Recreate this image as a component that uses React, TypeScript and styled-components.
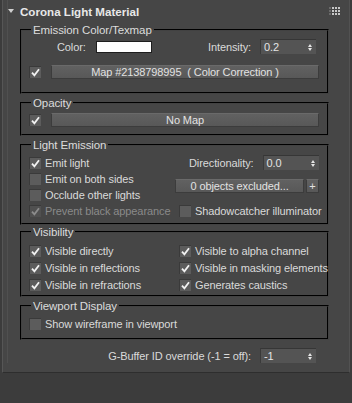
import React from "react";
import styled, { createGlobalStyle } from "styled-components";

const GlobalStyle = createGlobalStyle`
  html, body {
    margin: 0;
    padding: 0;
    background: #3c3c3c;
  }
  body {
    font-family: "Liberation Sans", Arial, sans-serif;
    font-size: 11px;
    letter-spacing: -0.1px;
    color: #dadada;
  }
`;

const Page = styled.div`
  width: 352px;
  height: 403px;
  padding-left: 2px;
  box-sizing: border-box;
`;

const Rollout = styled.div`
  width: 348px;
  height: 373px;
  box-sizing: border-box;
  background: #464646;
  border-left: 1px solid #565656;
  border-right: 1px solid #525252;
  border-bottom: 1px solid #2e2e2e;
`;

const Header = styled.div`
  height: 22px;
  display: flex;
  align-items: center;
  padding: 0 9px 0 0;
  border-left: 1px solid #505050;
  margin-left: 4px;
`;

const Arrow = styled.span`
  width: 0;
  height: 0;
  border-left: 3px solid transparent;
  border-right: 3px solid transparent;
  border-top: 4px solid #d0d0d0;
  margin-right: 6px;
`;

const Title = styled.span`
  font-weight: bold;
  font-size: 11.6px;
  letter-spacing: 0;
  color: #e8e8e8;
  flex: 1;
`;

const Grip = styled.div`
  display: grid;
  grid-template-columns: repeat(4, 2px);
  grid-auto-rows: 2px;
  gap: 1px;
`;

const Dot = styled.i<{ $dim?: boolean }>`
  display: block;
  background: ${({ $dim }) => ($dim ? "#6a6a6a" : "#c8c8c8")};
`;

const Body = styled.div`
  margin-left: 4px;
  border-left: 1px solid #505050;
  padding: 0 20px 0 12px;
  display: flex;
  flex-direction: column;
`;

const Group = styled.fieldset<{ $top: number; $pad: string }>`
  margin: ${({ $top }) => $top}px 0 0 0;
  padding: ${({ $pad }) => $pad};
  border: 2px groove #424242;
  min-width: 0;
`;

const Legend = styled.legend`
  padding: 0 2px;
  margin-left: 2px;
  line-height: 14px;
  font-size: 11.5px;
  color: #dcdcdc;
`;

const Row = styled.div<{ $h?: number; $mt?: number }>`
  display: flex;
  align-items: center;
  height: ${({ $h }) => $h ?? 16}px;
  margin-top: ${({ $mt }) => $mt ?? 0}px;
`;

const Label = styled.span<{ $ml?: number; $dim?: boolean }>`
  margin-left: ${({ $ml }) => $ml ?? 0}px;
  white-space: nowrap;
  color: ${({ $dim }) => ($dim ? "#8a8a8a" : "#dadada")};
`;

const Spacer = styled.div`
  flex: 1;
`;

const Swatch = styled.div`
  width: 56px;
  height: 12px;
  box-sizing: border-box;
  background: #ffffff;
  border: 1px solid #1e1e1e;
  margin-left: 10px;
`;

const SpinBox = styled.div<{ $mr?: number }>`
  width: 56px;
  height: 15px;
  box-sizing: border-box;
  margin-left: 9px;
  margin-right: ${({ $mr }) => $mr ?? 0}px;
  background: #545454;
  border-top: 1px solid #363636;
  border-left: 1px solid #3a3a3a;
  display: flex;
  align-items: center;
  padding-left: 3px;
  color: #e4e4e4;
`;

const SpinArrows = styled.span`
  margin-left: auto;
  margin-right: 4px;
  display: flex;
  flex-direction: column;
  gap: 1px;
`;

const Tri = styled.i<{ $down?: boolean }>`
  display: block;
  width: 0;
  height: 0;
  border-left: 2.5px solid transparent;
  border-right: 2.5px solid transparent;
  ${({ $down }) => ($down ? "border-top: 3px solid #e6e6e6;" : "border-bottom: 3px solid #e6e6e6;")}
`;

const Button = styled.div<{ $w?: number; $ml?: number }>`
  height: 14px;
  box-sizing: border-box;
  ${({ $w }) => ($w ? `width: ${$w}px;` : "flex: 1;")}
  margin-left: ${({ $ml }) => $ml ?? 0}px;
  background: linear-gradient(#616161, #585858);
  border: 1px solid #3c3c3c;
  border-top-color: #6a6a6a;
  display: flex;
  align-items: center;
  justify-content: center;
  color: #e2e2e2;
  white-space: nowrap;
`;

const Box = styled.span<{ $dim?: boolean }>`
  width: 12px;
  height: 12px;
  box-sizing: border-box;
  flex: none;
  background: ${({ $dim }) => ($dim ? "#505050" : "#5c5c5c")};
  border-top: 1px solid #3a3a3a;
  border-left: 1px solid #3a3a3a;
  display: flex;
  align-items: center;
  justify-content: center;
`;

const Columns = styled.div<{ $cols: string }>`
  display: grid;
  grid-template-columns: ${({ $cols }) => $cols};
`;

const Col = styled.div<{ $pt?: number }>`
  display: flex;
  flex-direction: column;
  padding-top: ${({ $pt }) => $pt ?? 0}px;
`;

const Footer = styled.div`
  display: flex;
  align-items: center;
  justify-content: flex-end;
  height: 15px;
  margin-top: 8px;
  padding-right: 13px;
`;

function Check({ on, dim }: { on?: boolean; dim?: boolean }) {
  return (
    <Box $dim={dim}>
      {on && (
        <svg width="9" height="9" viewBox="0 0 9 9">
          <path
            d="M1 4.6 L3.4 7.4 L8 1.2"
            fill="none"
            stroke={dim ? "#8c8c8c" : "#f2f2f2"}
            strokeWidth="1.8"
          />
        </svg>
      )}
    </Box>
  );
}

function CheckRow({
  label,
  on,
  dim,
  h,
  ml,
  mt,
}: {
  label: string;
  on?: boolean;
  dim?: boolean;
  h?: number;
  ml?: number;
  mt?: number;
}) {
  return (
    <Row $h={h} $mt={mt}>
      <Label $ml={ml}>
        <Check on={on} dim={dim} />
      </Label>
      <Label $ml={4} $dim={dim}>
        {label}
      </Label>
    </Row>
  );
}

function Spinner({ value, mr }: { value: string; mr?: number }) {
  return (
    <SpinBox $mr={mr}>
      {value}
      <SpinArrows>
        <Tri />
        <Tri $down />
      </SpinArrows>
    </SpinBox>
  );
}

export default function App() {
  const dots = [1, 0, 0, 0, 1, 0, 0, 0, 1, 0, 0, 0];
  return (
    <Page>
      <GlobalStyle />
      <Rollout>
        <Header>
          <Arrow />
          <Title>Corona Light Material</Title>
          <Grip>
            {dots.map((d, i) => (
              <Dot key={i} $dim={d === 1} />
            ))}
          </Grip>
        </Header>
        <Body>
          <Group $top={1} $pad="2px 8px 13px 7px">
            <Legend>Emission Color/Texmap</Legend>
            <Row $h={15}>
              <Label $ml={28}>Color:</Label>
              <Swatch />
              <Spacer />
              <Label>Intensity:</Label>
              <Spinner value="0.2" mr={3} />
            </Row>
            <Row $h={14} $mt={11}>
              <Check on />
              <Button $ml={10}>Map #2138798995&nbsp;&nbsp;( Color Correction )</Button>
            </Row>
          </Group>

          <Group $top={2} $pad="3px 8px 7px 7px">
            <Legend>Opacity</Legend>
            <Row $h={14}>
              <Check on />
              <Button $ml={10}>No Map</Button>
            </Row>
          </Group>

          <Group $top={2} $pad="0 8px 4px 7px">
            <Legend>Light Emission</Legend>
            <Columns $cols="146px 1fr">
              <Col $pt={3}>
                <CheckRow label="Emit light" on />
                <CheckRow label="Emit on both sides" />
                <CheckRow label="Occlude other lights" />
                <CheckRow label="Prevent black appearance" on dim />
              </Col>
              <Col $pt={3}>
                <Row $h={15}>
                  <Spacer />
                  <Label>Directionality:</Label>
                  <Spinner value="0.0" mr={3} />
                </Row>
                <Row $h={14} $mt={9}>
                  <Button $w={129}>0 objects excluded...</Button>
                  <Button $w={13} $ml={2}>+</Button>
                </Row>
                <CheckRow label="Shadowcatcher illuminator" ml={4} mt={10} />
              </Col>
            </Columns>
          </Group>

          <Group $top={0} $pad="3px 8px 2px 7px">
            <Legend>Visibility</Legend>
            <Columns $cols="150px 1fr">
              <Col>
                <CheckRow label="Visible directly" on h={17} />
                <CheckRow label="Visible in reflections" on h={17} />
                <CheckRow label="Visible in refractions" on h={17} />
              </Col>
              <Col>
                <CheckRow label="Visible to alpha channel" on h={17} />
                <CheckRow label="Visible in masking elements" on h={17} />
                <CheckRow label="Generates caustics" on h={17} />
              </Col>
            </Columns>
          </Group>

          <Group $top={2} $pad="3px 8px 6px 7px">
            <Legend>Viewport Display</Legend>
            <CheckRow label="Show wireframe in viewport" />
          </Group>

          <Footer>
            <Label>G-Buffer ID override (-1 = off):</Label>
            <Spinner value="-1" />
          </Footer>
        </Body>
      </Rollout>
    </Page>
  );
}
